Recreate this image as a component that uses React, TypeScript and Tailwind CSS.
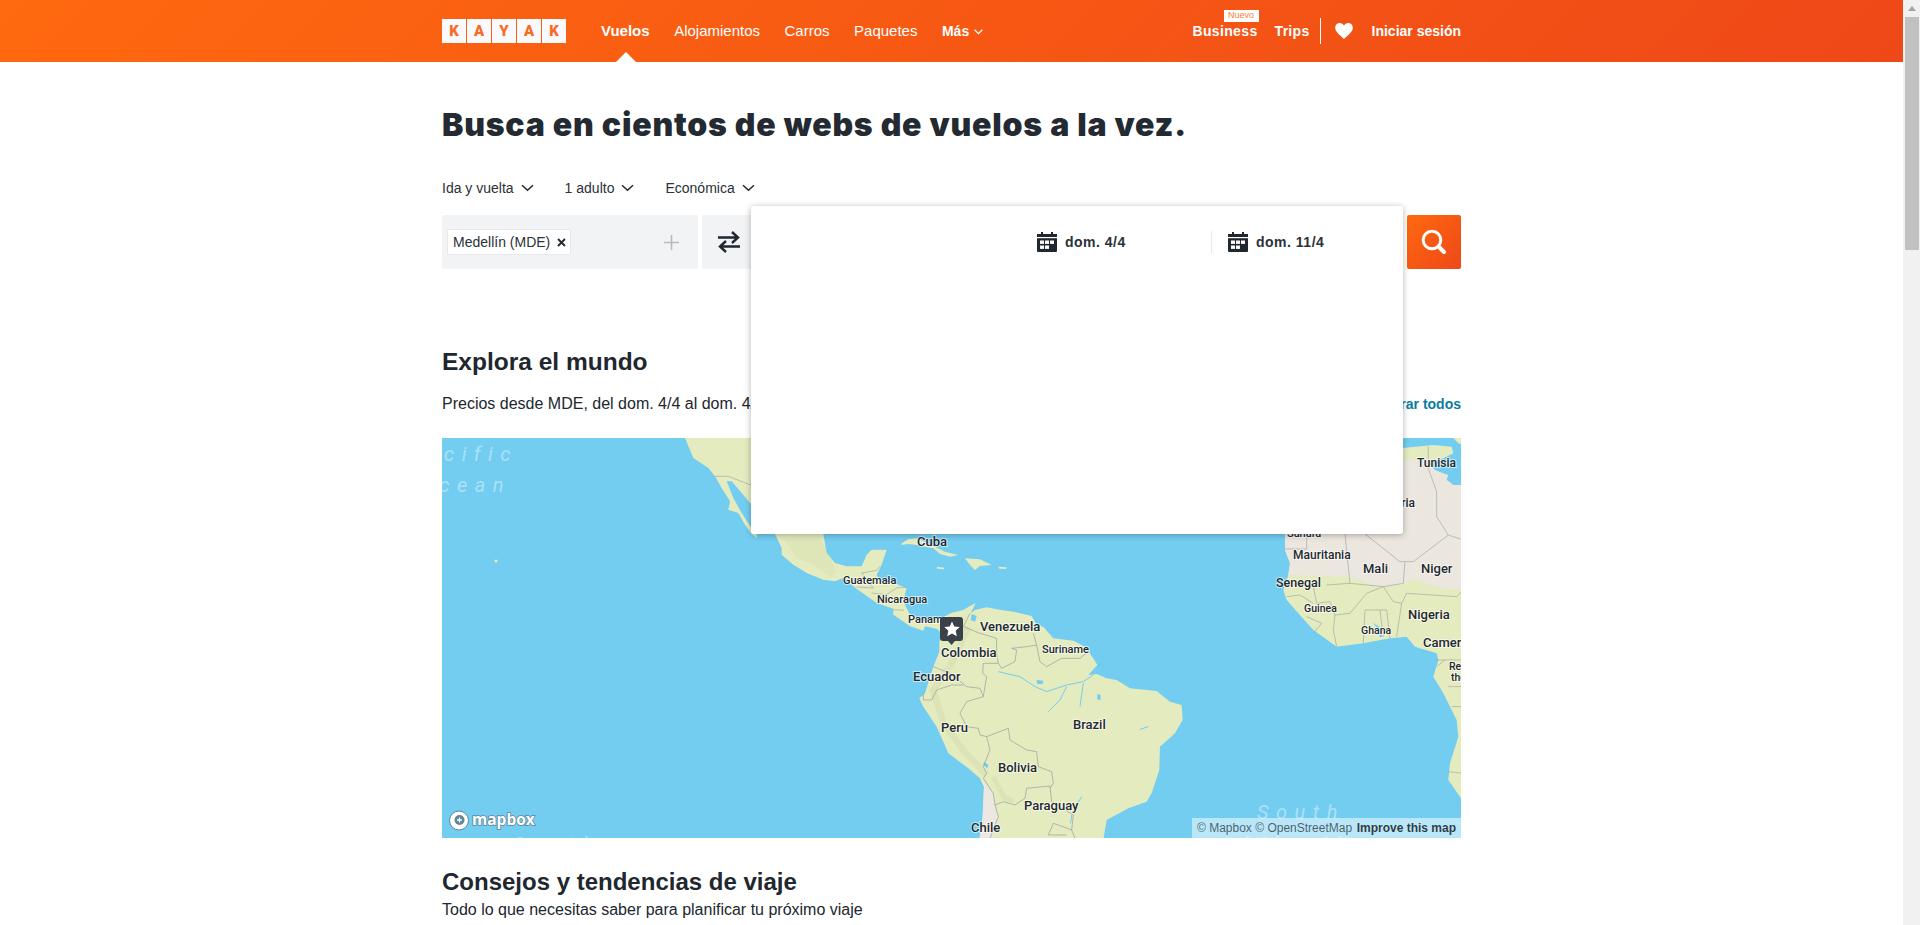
import type { ReactNode } from 'react';

const Chevron = ({ className = 'ml-[7px]' }: { className?: string }) => (
  <svg className={className} width="13" height="8" viewBox="0 0 13 8" fill="none">
    <path d="M1 1.2 6.5 6.2 12 1.2" stroke="#20272e" strokeWidth="1.5" />
  </svg>
);

const CalendarIcon = () => (
  <svg width="20" height="20" viewBox="0 0 20 20" fill="#20272e">
    <path d="M4 0h2v2h8V0h2v2h4v17a1 1 0 0 1-1 1H1a1 1 0 0 1-1-1V2h4V0Z" />
    <rect x="0" y="5" width="20" height="1.2" fill="#fff" />
    <g fill="#fff">
      <rect x="3" y="8.5" width="4" height="3.4" />
      <rect x="8" y="8.5" width="4" height="3.4" />
      <rect x="13" y="8.5" width="4" height="3.4" />
      <rect x="3" y="13.5" width="4" height="3.4" />
      <rect x="8" y="13.5" width="4" height="3.4" />
    </g>
  </svg>
);

const Option = ({ children, className }: { children: ReactNode; className?: string }) => (
  <div className={`flex items-center text-[14px] text-[#2b3138] ${className ?? ''}`}>
    {children}
    <Chevron />
  </div>
);

const land = '#e4ebbf';
const border = '#9a9f9f';

const labelProps = {
  fontFamily: 'Roboto, sans-serif',
  fontWeight: 500,
  fill: '#23292e',
  stroke: '#ffffff',
  strokeOpacity: 0.6,
  strokeWidth: 2,
  paintOrder: 'stroke',
} as const;

const labels: [string, number, number, number][] = [
  ['Cuba', 917, 546, 13],
  ['Guatemala', 843, 584, 11],
  ['Nicaragua', 877, 603, 11],
  ['Panama', 908, 623, 11],
  ['Venezuela', 980, 631, 13],
  ['Suriname', 1042, 653, 11],
  ['Colombia', 941, 657, 13],
  ['Ecuador', 913, 681, 13],
  ['Peru', 941, 732, 13],
  ['Brazil', 1073, 729, 13],
  ['Bolivia', 998, 772, 13],
  ['Paraguay', 1024, 810, 13],
  ['Chile', 971, 832, 13],
  ['Tunisia', 1417, 467, 12],
  ['Sahara', 1287, 537, 11],
  ['Mauritania', 1293, 559, 12],
  ['Mali', 1363, 573, 13],
  ['Niger', 1421, 573, 13],
  ['Senegal', 1276, 587, 12.5],
  ['Guinea', 1304, 612, 10.5],
  ['Nigeria', 1408, 619, 13],
  ['Ghana', 1361, 634, 10.5],
  ['Cameroon', 1423, 647, 13],
  ['Rep.', 1449, 670, 10.5],
  ['the', 1451, 681, 10.5],
];

const WorldMap = () => (
  <svg className="block h-[400px] w-[1019px]" viewBox="442 438 1019 400">
    <rect x="442" y="438" width="1019" height="400" fill="#72cdf1" />

    {/* baja, mexico, central america */}
    <g transform="translate(680 438) scale(0.3333)">
      <path
        fill={land}
        d="M15 0 40 60 85 90 105 115 125 150 150 190 145 215 175 225 195 260 215 288 232 300 228 285 285 288 305 330 305 350 340 380 380 405 430 425 465 430 490 420 530 452 590 495 640 512 640 530 690 565 730 578 735 565 770 572 800 600 830 560 780 540 730 550 690 530 680 510 670 490 680 450 640 435 600 430 590 410 605 380 620 335 575 335 560 350 545 385 500 385 465 375 440 345 430 288 430 0Z"
      />
      <path fill="#72cdf1" d="M140 130 155 130 215 200 215 270 185 225 160 180Z" />
      <path fill="#d8e0b0" d="M310 300 420 300 470 400 455 420 400 380 350 360Z" opacity="0.45" />
      <path
        fill="none"
        stroke={border}
        vectorEffect="non-scaling-stroke"
        strokeWidth="0.6"
        d="M105 115 145 115 215 142M545 405 590 397 600 385M545 405 580 450 530 447M575 465 620 470 650 450 680 447M640 515 672 517"
      />
    </g>

    {/* caribbean + south america */}
    <g transform="translate(880 530) scale(0.3333)">
      <path fill={land} d="M65 40 85 28 110 25 165 50 195 65 235 75 210 80 180 72 160 55 110 45 85 42 65 45Z" />
      <path fill={land} d="M255 85 300 88 335 105 300 108 285 120 270 105Z" />
      <path fill={land} d="M170 110 195 113 190 118 172 116Z" />
      <path fill={land} d="M355 110 380 112 378 117 358 116Z" />
      <path
        fill={land}
        d="M175 272 190 262 215 248 250 240 275 225 287 220 272 250 285 240 320 232 350 238 400 245 455 258 470 285 490 290 520 325 580 332 615 350 640 385 652 405 625 435 650 432 680 445 710 450 750 475 830 483 870 515 905 525 908 570 885 610 840 650 838 720 815 790 800 815 745 835 680 870 670 930 298 930 308 860 312 770 300 745 265 715 205 670 170 590 130 530 118 505 135 490 160 410 178 365 178 340 185 300Z"
      />
      <path
        fill="none"
        stroke="#d8e0b2"
        strokeWidth="20"
        strokeLinejoin="round"
        d="M265 290 215 400 160 480 190 580 250 660 320 735"
        opacity="0.7"
      />
      <path fill="none" stroke="#d8e0b2" strokeWidth="14" d="M340 740 370 800 400 815" opacity="0.7" />
      <path fill="#ece7e0" d="M300 745 340 790 345 825 355 860 335 930 298 930 308 860 312 770Z" />
      <path fill="#72cdf1" d="M275 252 290 258 285 275 272 270Z" />
      <path fill="#72cdf1" d="M312 695 325 705 322 715 310 705Z" />
      <path fill="#72cdf1" d="M652 492 662 495 662 510 652 508Z" />
      <path fill="#72cdf1" d="M470 450 490 452 488 462 472 462Z" />
      <path
        fill="none"
        stroke="#72cdf1"
        strokeWidth="3"
        d="M355 425 420 440 465 470 500 485 560 465 610 455 640 435M560 470 540 510 505 545M610 460 600 530M780 598 805 590M605 800 590 825M575 855 572 880"
      />
      <path
        fill="none"
        stroke={border}
        vectorEffect="non-scaling-stroke"
        strokeWidth="0.7"
        d="M270 250 250 290 300 310 350 325 350 370 355 400 365 415 405 395 410 360 395 355 440 350 470 345 460 310M470 345 480 395 500 410 545 385 600 385 625 365M355 400 310 400 308 430 320 440 310 500M160 410 210 430 260 470 300 475 310 500M130 490 130 510 155 510 170 480 215 465 250 465M310 500 260 515 240 550 260 590 295 595 300 615 320 620 385 595 390 630 440 660 470 665 475 710 515 725 520 760 510 775M320 620 330 660 310 710 320 730 310 745 340 790 345 825 370 815 405 825 435 805 440 775 510 768 515 815 580 855 575 900 585 925M345 825 355 860 330 925M575 900 520 880 505 915 560 915"
      />
    </g>

    {/* africa */}
    <g transform="translate(1180 430) scale(0.3333)">
      <path
        fill={land}
        d="M660 55 760 45 815 50 820 70 800 80 730 110 760 120 805 135 800 150 820 165 850 165 850 1115 805 1050 810 1000 835 920 830 870 790 790 760 740 775 690 770 670 705 650 680 620 630 625 550 640 470 650 400 600 355 550 320 510 310 480 325 435 330 400 315 360 315 300 660 300Z"
      />
      <path fill={land} d="M820 24 850 24 850 45 835 40Z" />
      <path
        fill="#ebe6de"
        d="M660 90 735 85 765 120 800 135 800 150 820 165 850 165 850 482 770 472 700 445 670 462 600 470 500 440 325 435 330 400 315 360 315 300 660 300Z"
      />
      <path fill="#72cdf1" d="M578 578 598 590 608 620 600 622 590 592Z" />
      <path
        fill="none"
        stroke={border}
        vectorEffect="non-scaling-stroke"
        strokeWidth="0.6"
        d="M745 50 745 115M745 115 770 185 770 260 805 315 850 330M805 315 700 395 660 395 555 312M495 312 510 460 440 465M510 460 610 470 670 460 675 395M610 470 640 515 665 520 650 620M665 520 680 490 830 500 850 480M315 357 380 357 380 315M610 470 560 490 510 550 465 555 460 600 470 650M400 470 410 520 450 515 465 555M555 540 620 540 630 625M555 540 550 640M600 540 610 620M320 500 360 495 400 520M380 560 425 580 400 610M770 690 850 690M770 710 795 690M805 770 850 770M815 830 850 830M805 1025 850 1030"
      />
    </g>

    <circle cx="496" cy="561" r="1.5" fill={land} />

    <g fontFamily="Roboto, sans-serif" fontStyle="italic" fontSize="20" letterSpacing="7.5" fill="#ffffff" fillOpacity="0.42">
      <text x="518" y="461" textAnchor="end">Pacific</text>
      <text x="511" y="492" textAnchor="end">Ocean</text>
      <text x="513" y="851">South</text>
      <text x="1257" y="819">South</text>
      <text x="1240" y="850">Atlantic</text>
    </g>

    {labels.map(([name, x, y, size]) => (
      <text key={name} x={x} y={y} fontSize={size} {...labelProps}>
        {name}
      </text>
    ))}
    <text x="1415" y="507" fontSize="12" textAnchor="end" {...labelProps}>
      Algeria
    </text>

    {/* pin */}
    <path
      fill="#3a4149"
      d="M943 617h17a3 3 0 0 1 3 3v18a3 3 0 0 1-3 3h-5l-3.500 4-3.500-4h-5a3 3 0 0 1-3-3v-18a3 3 0 0 1 3-3Z"
    />
    <path
      fill="#ffffff"
      d="m952 621.500 2.300 5 5.400.6-4 3.700 1.100 5.400-4.800-2.700-4.800 2.700 1.100-5.400-4-3.700 5.400-.6Z"
    />

    {/* mapbox mark */}
    <circle cx="459" cy="820.500" r="9.500" fill="#ffffff" stroke="#5f8599" strokeWidth="1" />
    <circle cx="459.500" cy="820" r="5" fill="#5f8599" />
    <path d="M457 820h5M459.500 817.500v5" stroke="#ffffff" strokeWidth="1.300" />
    <text
      x="472"
      y="825"
      fontFamily="'Open Sans', sans-serif"
      fontSize="15.500"
      fontWeight="700"
      fill="#ffffff"
      stroke="#5f8599"
      strokeWidth="1.600"
      paintOrder="stroke"
    >
      mapbox
    </text>
  </svg>
);

const App = () => {
  return (
    <div className="flex h-[925px] overflow-hidden bg-white font-['Liberation_Sans',Arial,sans-serif] text-[#20272e]">
      <div className="w-[1903px] shrink-0">
        <header className="h-[62px] bg-[linear-gradient(135deg,#ff690f,#ee4818)] text-white">
          <div className="relative mx-auto flex h-full w-[1019px] items-center text-[14px]">
            <div className="flex gap-px">
              {['K', 'A', 'Y', 'A', 'K'].map((l, i) => (
                <div
                  key={i}
                  className="flex h-[24px] w-[24px] items-center justify-center bg-[#faf9fd] font-['Roboto',sans-serif] text-[15px] font-black leading-none text-[#fb6a1e]"
                >
                  {l}
                </div>
              ))}
            </div>
            <nav className="ml-[35px] flex items-center gap-[24.5px] text-[15px]">
              <span className="relative font-bold">
                Vuelos
                <span className="absolute left-[15px] top-[32px] h-0 w-0 border-x-[10px] border-b-[10px] border-x-transparent border-b-white" />
              </span>
              <span>Alojamientos</span>
              <span>Carros</span>
              <span>Paquetes</span>
              <span className="flex items-center text-[14px] font-bold">
                Más
                <svg className="ml-[5px] mt-[2px]" width="9" height="6" viewBox="0 0 9 6" fill="none">
                  <path d="M.7.8 4.500 4.600 8.300.8" stroke="#fff" strokeWidth="1.300" />
                </svg>
              </span>
            </nav>
            <div className="ml-auto flex items-center">
              <span className="relative font-bold tracking-[0.35px]">
                Business
                <span className="absolute right-[-1px] top-[-11px] flex h-[12px] w-[35px] items-center justify-center bg-white text-[9px] font-normal leading-none tracking-normal text-[#fb7a3a]">
                  Nuevo
                </span>
              </span>
              <span className="ml-[17px] font-bold tracking-[0.3px]">Trips</span>
              <span className="ml-[10px] h-[26px] w-px bg-white" />
              <svg className="ml-[14px]" width="18" height="16" viewBox="0 0 18 16" fill="#fff">
                <path d="M9 16C4 11.500.2 8.600.2 4.800.2 2 2.300 0 4.800 0 6.500 0 8.100.9 9 2.400 9.900.9 11.500 0 13.200 0c2.500 0 4.600 2 4.600 4.800C17.800 8.600 14 11.500 9 16Z" />
              </svg>
              <span className="ml-[19px] font-bold">Iniciar sesión</span>
            </div>
          </div>
        </header>

        <main className="mx-auto w-[1019px]">
          <h1 className="mt-[47px] font-['Inter',sans-serif] text-[32px] font-black leading-[32px] tracking-[0.8px] text-[#232a31]">
            Busca en cientos de webs de vuelos a la vez.
          </h1>

          <div className="mt-[37px] flex h-[20px] items-center">
            <Option>Ida y vuelta</Option>
            <Option className="ml-[31px]">1 adulto</Option>
            <Option className="ml-[31px]">Económica</Option>
          </div>

          <div className="relative mt-[17px] flex h-[54px] gap-1">
            <div className="flex w-[256px] items-center rounded-[2px] bg-[#f2f3f5] pl-[5px]">
              <div className="flex h-[26px] items-center rounded-[2px] border border-[#e6e8eb] bg-white pl-[5px] pr-[4px] text-[14px] text-[#2b3138]">
                Medellín (MDE)
                <svg className="ml-[7px]" width="9" height="9" viewBox="0 0 9 9" fill="none">
                  <path d="M1 1 8 8M8 1 1 8" stroke="#20272e" strokeWidth="1.800" />
                </svg>
              </div>
              <svg className="ml-auto mr-[19px]" width="15" height="15" viewBox="0 0 15 15" fill="none">
                <path d="M7.500 0v15M0 7.500h15" stroke="#b4bbc3" strokeWidth="1.600" />
              </svg>
            </div>
            <div className="flex w-[120px] items-center rounded-[2px] bg-[#f2f3f5] pl-[15px]">
              <svg width="24" height="24" viewBox="0 0 24 24" fill="none">
                <path d="M1 7.500h20M15 2l6 5.500-6 5.500M23 16.500H3M9 11l-6 5.500 6 5.500" stroke="#20272e" strokeWidth="2.400" />
              </svg>
            </div>
            <button className="ml-auto flex w-[54px] items-center justify-center rounded-[2px] bg-[linear-gradient(135deg,#ff690f,#ee4818)]">
              <svg width="26" height="26" viewBox="0 0 26 26" fill="none">
                <circle cx="11" cy="11" r="8.800" stroke="#fff" strokeWidth="3" />
                <path d="M17.500 17.500 23 23" stroke="#fff" strokeWidth="4" strokeLinecap="round" />
              </svg>
            </button>

            {/* open date picker */}
            <div className="absolute left-[309px] top-[-9px] z-10 h-[328px] w-[652px] rounded-[3px] bg-white shadow-[0_1px_6px_rgba(0,0,0,0.3)]">
              <div className="absolute left-[286px] top-[25px] flex h-[22px] items-center text-[14px] font-bold text-[#2b3138]">
                <CalendarIcon />
                <span className="ml-[8px] tracking-[0.5px]">dom. 4/4</span>
              </div>
              <div className="absolute left-[460px] top-[25px] h-[22px] w-px bg-[#e6e8eb]" />
              <div className="absolute left-[477px] top-[25px] flex h-[22px] items-center text-[14px] font-bold text-[#2b3138]">
                <CalendarIcon />
                <span className="ml-[8px] tracking-[0.5px]">dom. 11/4</span>
              </div>
            </div>
          </div>

          <h2 className="mt-[79px] text-[24.500px] font-bold leading-[28px]">Explora el mundo</h2>
          <div className="mt-[16px] flex h-[24px] items-center justify-between">
            <span className="text-[16px]">Precios desde MDE, del dom. 4/4 al dom. 4/11</span>
            <span className="text-[14px] font-bold text-[#0a7b9f]">Mostrar todos</span>
          </div>

          <div className="relative mt-[22px] h-[400px] overflow-hidden">
            <WorldMap />
            <div className="absolute bottom-0 right-0 flex h-[20px] w-[269px] items-center justify-between bg-white/50 pl-[5px] pr-[5px] text-[12px] text-black/60">
              <span>© Mapbox © OpenStreetMap</span>
              <span className="font-bold text-black/75">Improve this map</span>
            </div>
          </div>

          <h2 className="mt-[30px] text-[24px] font-bold leading-[28px]">Consejos y tendencias de viaje</h2>
          <p className="mt-[2px] text-[16px] leading-[24px]">Todo lo que necesitas saber para planificar tu próximo viaje</p>
        </main>
      </div>

      {/* page scrollbar */}
      <div className="flex w-[17px] flex-col bg-[#f1f1f1]">
        <div className="flex h-[17px] items-center justify-center">
          <div className="h-0 w-0 border-x-[4px] border-b-[5px] border-x-transparent border-b-[#a3a3a3]" />
        </div>
        <div className="ml-[2px] h-[233px] w-[14px] bg-[#c1c1c1]" />
      </div>
    </div>
  );
};

export default App;
